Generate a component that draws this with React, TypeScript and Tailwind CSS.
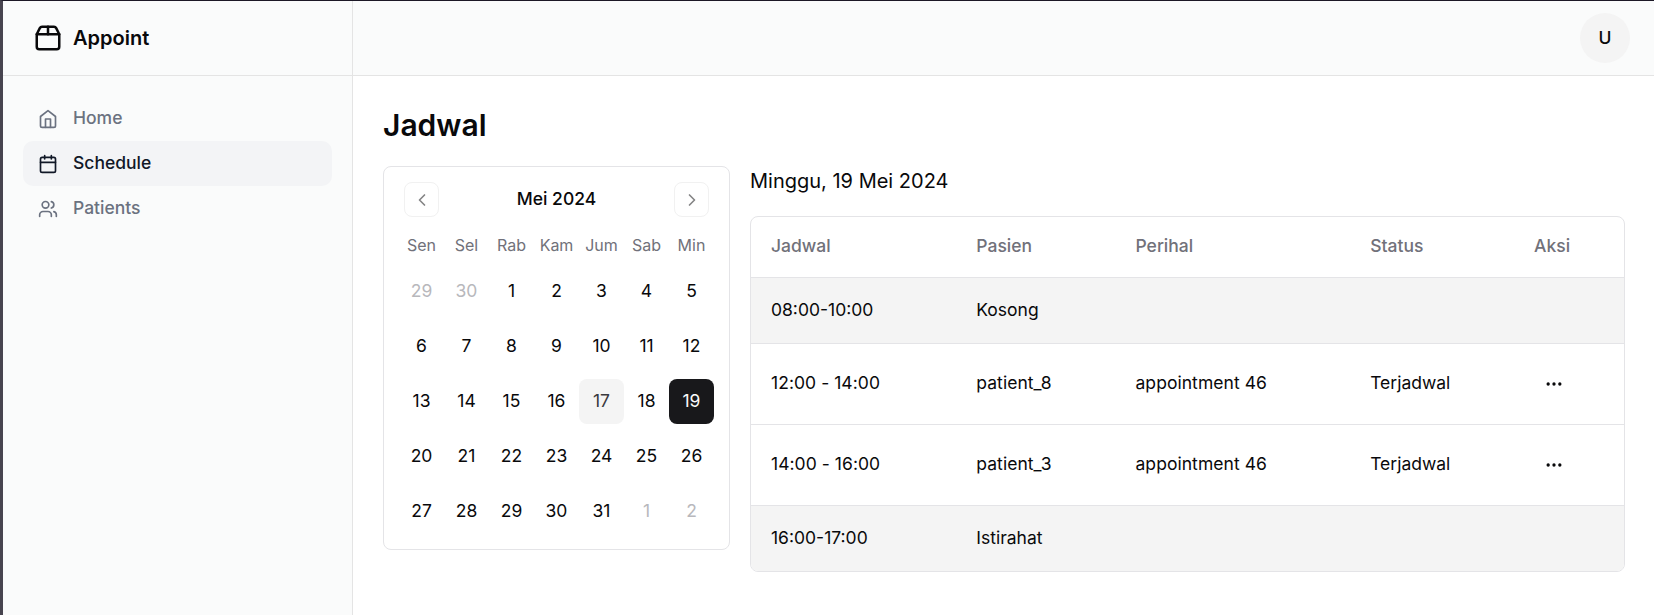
import React from "react";

type IconProps = { className?: string; children: React.ReactNode };

function Icon({ className, children }: IconProps) {
  return (
    <svg
      viewBox="0 0 24 24"
      fill="none"
      stroke="currentColor"
      strokeWidth="2"
      strokeLinecap="round"
      strokeLinejoin="round"
      className={className}
    >
      {children}
    </svg>
  );
}

const navItems = [
  {
    label: "Home",
    active: false,
    icon: (
      <>
        <path d="m3 9 9-7 9 7v11a2 2 0 0 1-2 2H5a2 2 0 0 1-2-2z" />
        <polyline points="9 22 9 12 15 12 15 22" />
      </>
    ),
  },
  {
    label: "Schedule",
    active: true,
    icon: (
      <>
        <path d="M8 2v4" />
        <path d="M16 2v4" />
        <rect width="18" height="18" x="3" y="4" rx="2" />
        <path d="M3 10h18" />
      </>
    ),
  },
  {
    label: "Patients",
    active: false,
    icon: (
      <>
        <path d="M16 21v-2a4 4 0 0 0-4-4H6a4 4 0 0 0-4 4v2" />
        <circle cx="9" cy="7" r="4" />
        <path d="M22 21v-2a4 4 0 0 0-3-3.87" />
        <path d="M16 3.13a4 4 0 0 1 0 7.75" />
      </>
    ),
  },
];

const weekdays = ["Sen", "Sel", "Rab", "Kam", "Jum", "Sab", "Min"];

const weeks = [
  [29, 30, 1, 2, 3, 4, 5],
  [6, 7, 8, 9, 10, 11, 12],
  [13, 14, 15, 16, 17, 18, 19],
  [20, 21, 22, 23, 24, 25, 26],
  [27, 28, 29, 30, 31, 1, 2],
];

const rows = [
  { time: "08:00-10:00", patient: "Kosong" },
  { time: "12:00 - 14:00", patient: "patient_8", subject: "appointment 46", status: "Terjadwal" },
  { time: "14:00 - 16:00", patient: "patient_3", subject: "appointment 46", status: "Terjadwal" },
  { time: "16:00-17:00", patient: "Istirahat" },
];

function dayClass(week: number, day: number) {
  const outside = (week === 0 && day > 20) || (week === 4 && day < 10);
  if (outside) return "text-[#b8b8bc]";
  if (day === 19) return "bg-[#18181b] text-[#fafafa]";
  if (day === 17) return "bg-[#f4f4f4] text-[#3a3a3e]";
  return "text-[#09090b]";
}

function Sidebar() {
  return (
    <aside className="w-[350px] shrink-0 border-r border-[#e4e4e4] bg-[#fafbfb]">
      <div className="flex h-[75px] items-center gap-2.5 border-b border-[#e4e4e4] px-[30px]">
        <Icon className="size-[30px]">
          <path d="M3 9h18v10a2 2 0 0 1-2 2H5a2 2 0 0 1-2-2V9Z" />
          <path d="m3 9 2.45-4.9A2 2 0 0 1 7.24 3h9.52a2 2 0 0 1 1.8 1.1L21 9" />
          <path d="M12 3v6" />
        </Icon>
        <span className="text-[20px] leading-[30px] font-semibold">Appoint</span>
      </div>
      <nav className="px-5 pt-5 text-[17.5px] leading-[25px] font-medium">
        {navItems.map((item) => (
          <a
            key={item.label}
            className={
              item.active
                ? "flex items-center gap-[15px] rounded-[10px] bg-[#f3f4f6] px-[15px] py-2.5 text-[#111827]"
                : "flex items-center gap-[15px] rounded-[10px] px-[15px] py-2.5 text-[#6b7280]"
            }
          >
            <Icon className="size-5">{item.icon}</Icon>
            <span className="-mt-px mb-px">{item.label}</span>
          </a>
        ))}
      </nav>
    </aside>
  );
}

function ArrowButton({ d }: { d: string }) {
  return (
    <button className="flex size-[35px] items-center justify-center rounded-[8px] border border-[#f1f1f1] text-[#848485]">
      <Icon className="size-5">
        <path d={d} />
      </Icon>
    </button>
  );
}

function Calendar() {
  return (
    <div className="h-[384px] w-[347px] shrink-0 rounded-[8px] border border-[#e4e4e7] p-[15px]">
      <div className="flex items-center justify-between px-[5px]">
        <ArrowButton d="m15 18-6-6 6-6" />
        <span className="-mt-px mb-px text-[17.5px] leading-[25px] font-medium">Mei 2024</span>
        <ArrowButton d="m9 18 6-6-6-6" />
      </div>
      <div className="mt-[15px] grid grid-cols-7 text-center text-[16px] leading-[27px] text-[#71717a]">
        {weekdays.map((d) => (
          <span key={d}>{d}</span>
        ))}
      </div>
      <div className="mt-2.5 flex flex-col gap-2.5">
        {weeks.map((week, w) => (
          <div key={w} className="grid grid-cols-7 text-[17.5px]">
            {week.map((day) => (
              <div
                key={day}
                className={`flex size-[45px] items-center justify-center rounded-[8px] ${dayClass(w, day)}`}
              >
                {day}
              </div>
            ))}
          </div>
        ))}
      </div>
    </div>
  );
}

const columns = "grid grid-cols-[205.3px_159.2px_234.7px_163.9px_1fr] items-center *:px-5";

function Schedule() {
  return (
    <section className="w-[875px] shrink-0">
      <p className="text-[20px] leading-[30px]">Minggu, 19 Mei 2024</p>
      <div className="mt-5 overflow-hidden rounded-[8px] border border-[#e4e4e7] text-[17.5px] leading-[25px]">
        <div className={`${columns} h-[61px] border-b border-[#e4e4e7] pb-1 font-medium text-[#71717a]`}>
          <span>Jadwal</span>
          <span>Pasien</span>
          <span>Perihal</span>
          <span>Status</span>
          <span>Aksi</span>
        </div>
        {rows.map((row) => {
          const cell = row.status ? "-mt-0.5 mb-0.5 tracking-[0.05px]" : "-mt-px mb-px";
          return (
            <div
              key={row.time}
              className={
                row.status
                  ? `${columns} h-[81px] border-b border-[#e4e4e7]`
                  : `${columns} h-[66px] border-b border-[#e4e4e7] bg-[#f4f4f4] last:h-[65px] last:border-b-0`
              }
            >
              <span className={cell}>{row.time}</span>
              <span className={cell}>{row.patient}</span>
              <span className={cell}>{row.subject}</span>
              <span className={row.status ? "-mt-0.5 mb-0.5" : ""}>{row.status}</span>
              <span>
                {row.status && (
                  <button className="flex size-10 items-center justify-center">
                    <Icon className="size-5">
                      <circle cx="12" cy="12" r="1" />
                      <circle cx="19" cy="12" r="1" />
                      <circle cx="5" cy="12" r="1" />
                    </Icon>
                  </button>
                )}
              </span>
            </div>
          );
        })}
      </div>
    </section>
  );
}

export default function App() {
  return (
    <div className="flex h-[615px] w-[1654px] overflow-hidden border-t border-l-[3px] border-t-[#1c1826] border-l-[#47444f] bg-white font-['Inter',sans-serif] text-[#09090b]">
      <Sidebar />
      <div className="flex min-w-0 flex-1 flex-col">
        <header className="flex h-[75px] shrink-0 items-center justify-end border-b border-[#e4e4e4] bg-[#fafbfb] pr-6">
          <div className="flex size-[50px] items-center justify-center rounded-full bg-[#f4f4f4] text-[17.5px] font-medium">
            U
          </div>
        </header>
        <main className="flex flex-col gap-5 p-[30px]">
          <h1 className="-mt-px mb-px text-[30px] leading-10 font-semibold">Jadwal</h1>
          <div className="flex items-start gap-5">
            <Calendar />
            <Schedule />
          </div>
        </main>
      </div>
    </div>
  );
}
